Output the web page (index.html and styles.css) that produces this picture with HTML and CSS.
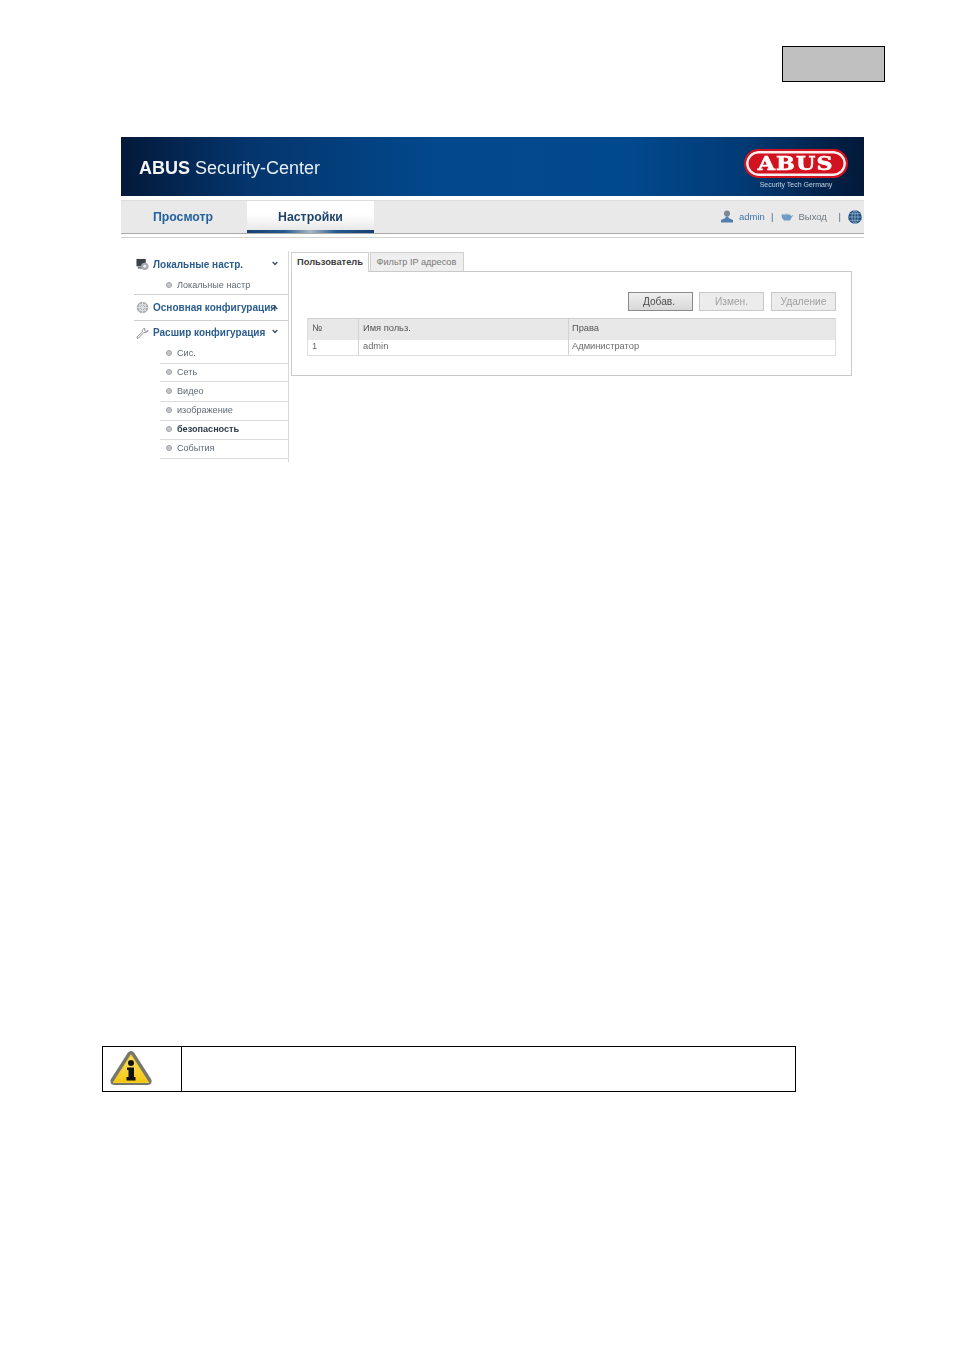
FILE: index.html
```html
<!DOCTYPE html>
<html lang="ru">
<head>
<meta charset="utf-8">
<title>ABUS Security-Center</title>
<link rel="stylesheet" href="styles.css">
</head>
<body>
<div class="page">
  <div class="page-no"></div>
  <div class="shot">
    <header class="banner">
      <div class="brand"><b>ABUS</b> Security-Center</div>
      <div class="logo">
        <div class="pill"><span>ABUS</span></div>
        <div class="tag">Security Tech Germany</div>
      </div>
    </header>
    <nav class="nav">
      <a class="nav-tab">Просмотр</a>
      <a class="nav-tab active">Настройки</a>
      <div class="userbar">
        <svg class="ic-user" viewBox="0 0 14 13"><circle cx="7" cy="3.6" r="3" fill="#7d8792"/><path d="M5.500 6.500h3v1.600l4.500 2V12.500H1v-2.400l4.500-2z" fill="#4f7fae"/></svg>
        <span class="u-admin">admin</span>
        <span class="sep sep1">|</span>
        <svg class="ic-exit" viewBox="0 0 13 9"><path d="M0.500 2.500h8.500l1 1.500 2.500-1-2 2.500-1.500 3H3L1 6z" fill="#6f9bc6"/><path d="M3 2.500C4 1 7 1 8 2.500z" fill="#a9b9c8"/></svg>
        <span class="u-exit">Выход</span>
        <span class="sep sep2">|</span>
        <svg class="ic-globe" viewBox="0 0 14 14"><circle cx="7" cy="7" r="6.800" fill="#1d4d7d"/><g fill="none" stroke="#b9cfe2" stroke-width=".6"><ellipse cx="7" cy="7" rx="3" ry="6.400"/><path d="M7 .4v13.200M.4 7h13.200M1.400 3.700h11.200M1.400 10.300h11.200"/></g></svg>
      </div>
    </nav>
    <div class="rule"></div>
    <div class="content">
      <aside class="side">
        <div class="group first">
          <svg class="g-ic" viewBox="0 0 14 13"><rect x="0.500" y="0.500" width="10" height="8" fill="#3d4148"/><rect x="2" y="9" width="7" height="2" fill="#777"/><circle cx="9.500" cy="8.500" r="4" fill="#a7abaf"/><circle cx="9.500" cy="8.500" r="1.600" fill="#eee"/></svg>
          <span class="g-title">Локальные настр.</span>
          <svg class="chev c1" viewBox="0 0 6 5"><path d="M.7 1l2.300 2.500L5.300 1" fill="none" stroke="#3b4b5c" stroke-width="1.300"/></svg>
        </div>
        <ul class="subs end">
          <li><i></i>Локальные настр</li>
        </ul>
        <div class="group second">
          <svg class="g-ic" viewBox="0 0 13 13"><circle cx="6.500" cy="6.500" r="5.800" fill="#a9adb0"/><g fill="none" stroke="#e8e8e8" stroke-width=".8"><circle cx="6.500" cy="6.500" r="3.400"/><path d="M6.500.5v12M.5 6.500h12M2.300 2.300l8.400 8.400M10.700 2.300l-8.400 8.400"/></g></svg>
          <span class="g-title">Основная конфигурация</span>
          <svg class="chev c2" viewBox="0 0 6 5"><path d="M.7 4L3 1.500 5.300 4" fill="none" stroke="#3b4b5c" stroke-width="1.300"/></svg>
        </div>
        <div class="group third">
          <svg class="g-ic" viewBox="0 0 13 13"><path d="M1 12l1 .5 6-6.200c1.700.6 3.500-.2 4-1.900l-1.900 1-1.500-1 .2-2.100c-1.800.2-3 2-2.500 3.700L1 11z" fill="#fff" stroke="#777" stroke-width=".8"/></svg>
          <span class="g-title">Расшир конфигурация</span>
          <svg class="chev c3" viewBox="0 0 6 5"><path d="M.7 1l2.300 2.500L5.300 1" fill="none" stroke="#3b4b5c" stroke-width="1.300"/></svg>
        </div>
        <ul class="subs lined">
          <li class="h19"><i></i>Сис.</li>
          <li class="h17"><i></i>Сеть</li>
          <li class="h19"><i></i>Видео</li>
          <li class="h18"><i></i>изображение</li>
          <li class="h18 on"><i></i>безопасность</li>
          <li class="h18"><i></i>События</li>
        </ul>
      </aside>
      <main class="main">
        <div class="tabs">
          <div class="tab on">Пользователь</div>
          <div class="tab">Фильтр IP адресов</div>
        </div>
        <section class="panel">
          <div class="actions">
            <button class="btn primary">Добав.</button>
            <button class="btn">Измен.</button>
            <button class="btn">Удаление</button>
          </div>
          <div class="table">
            <div class="row head"><div class="c no">№</div><div class="c name">Имя польз.</div><div class="c role">Права</div></div>
            <div class="row"><div class="c no">1</div><div class="c name">admin</div><div class="c role">Администратор</div></div>
          </div>
        </section>
      </main>
    </div>
  </div>
  <div class="note">
    <div class="note-icon">
      <svg viewBox="0 0 44 36" class="warn">
        <defs><linearGradient id="wy" x1="0" y1="0" x2="0" y2="1"><stop offset="0" stop-color="#fbe56e"/><stop offset="1" stop-color="#f5c60f"/></linearGradient></defs>
        <path d="M22 1C20 1 19 2.500 18 4L2 29C.5 32 2 35 5.500 35H38.500C42 35 43.500 32 42 29L26 4C25 2.500 24 1 22 1Z" fill="#77766a"/>
        <path d="M22 5L4.500 32.500H39.500Z" fill="url(#wy)" stroke="#f7cf2a" stroke-width="1.200" stroke-linejoin="round"/>
        <circle cx="22" cy="13" r="3" fill="#111"/>
        <path d="M18 17.500H25V27H26.500V30.500H17.500V27H19.500V20H18Z" fill="#111"/>
      </svg>
    </div>
    <div class="note-body"></div>
  </div>
</div>
</body>
</html>
```
FILE: styles.css
```css
* { box-sizing: border-box; }
html, body { margin: 0; padding: 0; background: #fff; }
body { font-family: "Liberation Sans", Arial, sans-serif; }
.page { width: 955px; height: 1350px; padding-top: 46px; overflow: hidden; }
.page-no { width: 103px; height: 36px; margin-left: 782px; background: #c0c0c0; border: 1px solid #000; }
.shot { width: 743px; margin: 55px 0 0 121px; filter: blur(.3px); }

.banner { height: 59px; display: flex; justify-content: space-between; align-items: flex-start;
  background: linear-gradient(90deg, #03193a 0%, #04356c 17%, #02488c 42%, #01498e 68%, #023a74 84%, #021f45 96%, #03193a 100%); }
.brand { margin: 21px 0 0 18px; font-size: 18px; line-height: 20px; color: #e9eef3; white-space: nowrap; }
.brand b { color: #f4f4f4; }
.logo { width: 104px; margin: 12px 16px 0 0; display: flex; flex-direction: column; align-items: center; }
.pill { width: 104px; height: 29px; border-radius: 15px; background: #d2131f; border: 2.500px solid #d2131f; box-shadow: inset 0 0 0 2.500px #fbeeee; display: flex; align-items: center; justify-content: center; }
.pill span { font-family: "DejaVu Serif", serif; font-weight: 700; font-size: 18.500px; line-height: 22px; color: #fff; -webkit-text-stroke: .6px #fff; letter-spacing: 1px; transform: scaleX(1.2); }
.tag { margin-top: 3px; font-size: 7px; line-height: 8px; color: #c7d3e0; white-space: nowrap; }

.nav { height: 34px; margin-top: 4px; background: #e9e9e9; border-top: 1px solid #dcdcdc; border-bottom: 1px solid #a9a9a9; display: flex; align-items: stretch; }
.nav-tab { width: 126px; padding-right: 2px; font-size: 12.300px; font-weight: 700; line-height: 33px; text-align: center; color: #24629f; }
.nav-tab.active { width: 127px; padding-right: 0; color: #1f4468; background: linear-gradient(180deg, #fff 0%, #fff 45%, #e8e8e8 100%); border-bottom: 3px solid; border-image: linear-gradient(90deg, #173f70, #24598f 30%, #a9b8c6 50%, #24598f 70%, #173f70) 1; }
.userbar { flex: 1; display: flex; align-items: center; padding-bottom: 1px; font-size: 9.500px; color: #6f7780; }
.ic-user { width: 14px; height: 13px; margin-left: 346px; flex: none; }
.u-admin { margin-left: 5px; width: 29px; color: #3f74ab; }
.sep { color: #4b6a88; }
.sep1 { margin-left: 3px; }
.ic-exit { width: 13px; height: 9px; margin-left: 8px; flex: none; }
.u-exit { margin-left: 4px; width: 33px; }
.sep2 { margin-left: 7px; }
.ic-globe { width: 14px; height: 14px; margin-left: 7px; flex: none; }

.rule { height: 1px; margin-top: 3px; background: #d4d4d4; }

.content { display: flex; margin-top: 13px; }
.side { width: 168px; height: 211px; border-right: 1px solid #d8d8d8; }
.group { position: relative; margin-left: 13px; display: flex; align-items: center; font-weight: 700; font-size: 10px; color: #2b5d8f; }
.group.first { height: 25px; padding-top: 1px; }
.group.second { height: 26px; border-bottom: 1px solid #cfcfcf; }
.group.third { height: 23px; padding-bottom: 1px; }
.g-ic { width: 13px; height: 13px; margin-left: 2px; flex: none; }
.g-title { margin-left: 4px; white-space: nowrap; }
.chev { position: absolute; width: 6px; height: 5px; }
.c1 { left: 138px; top: 10px; }
.c2 { left: 138px; top: 10px; }
.c3 { left: 138px; top: 8px; }
.subs { list-style: none; margin: 0; padding: 0 0 0 39px; font-size: 9.100px; color: #5f6a75; }
.subs.end { margin-left: 13px; padding-left: 26px; height: 19px; border-bottom: 1px solid #cfcfcf; }
.subs li { display: flex; align-items: center; padding-left: 6px; height: 18px; white-space: nowrap; }
.subs i { width: 6px; height: 6px; margin-right: 5px; border-radius: 50%; background: #c5c9cc; border: 1px solid #9da3a8; flex: none; }
.lined li { border-bottom: 1px solid #dcdcdc; padding-bottom: 2px; }
.lined li.h19 { height: 20px; }
.lined li.h17 { height: 18px; }
.lined li.h18 { height: 19px; }
.lined li.on { font-weight: 700; color: #2c3a48; }

.main { width: 561px; margin-left: 2px; }
.tabs { display: flex; height: 20px; margin-top: 1px; gap: 1px; position: relative; z-index: 1; }
.tab { height: 19px; padding: 0 6px; font-size: 9.200px; line-height: 18px; color: #777; background: #eee; border: 1px solid #cfcfcf; border-bottom: 0; white-space: nowrap; }
.tab.on { height: 20px; font-size: 9.300px; font-weight: 700; background: #fff; color: #3d3d3d; width: 78px; padding: 0 0 0 5px; }
.tab + .tab { width: 94px; padding-left: 5.500px; }
.panel { height: 105px; margin-top: -1px; padding: 20px 15px 0; border: 1px solid #c9c9c9; }
.actions { display: flex; justify-content: flex-end; gap: 6px; }
.btn { width: 65px; height: 19px; padding: 0; font: 10.200px "Liberation Sans", Arial, sans-serif; color: #a0a0a0; background: #ececec; border: 1px solid #c8c8c8; }
.btn:last-child { margin-left: 1px; }
.btn.primary { padding-right: 3px; color: #4d4d4d; background: linear-gradient(180deg, #efefef, #d8d8d8); border-color: #8a8a8a; }
.table { margin-top: 7px; border: 1px solid #dedede; border-top-color: #cfcfcf; font-size: 9.300px; color: #6a6a6a; }
.row { display: flex; height: 15px; }
.row.head { height: 21px; background: #e8e8e8; color: #555; }
.c { display: flex; align-items: center; padding: 0 0 3px 4px; border-right: 1px solid #d2d2d2; }
.no { width: 51px; }
.name { width: 210px; }
.role { flex: 1; border-right: 0; padding-left: 3px; }

.note { display: flex; width: 694px; height: 46px; margin: 584px 0 0 102px; border: 1px solid #000; }
.note-icon { width: 79px; padding: 3px 0 0 6px; border-right: 1px solid #000; }
.warn { display: block; width: 44px; height: 36px; }
.note-body { flex: 1; }
```
